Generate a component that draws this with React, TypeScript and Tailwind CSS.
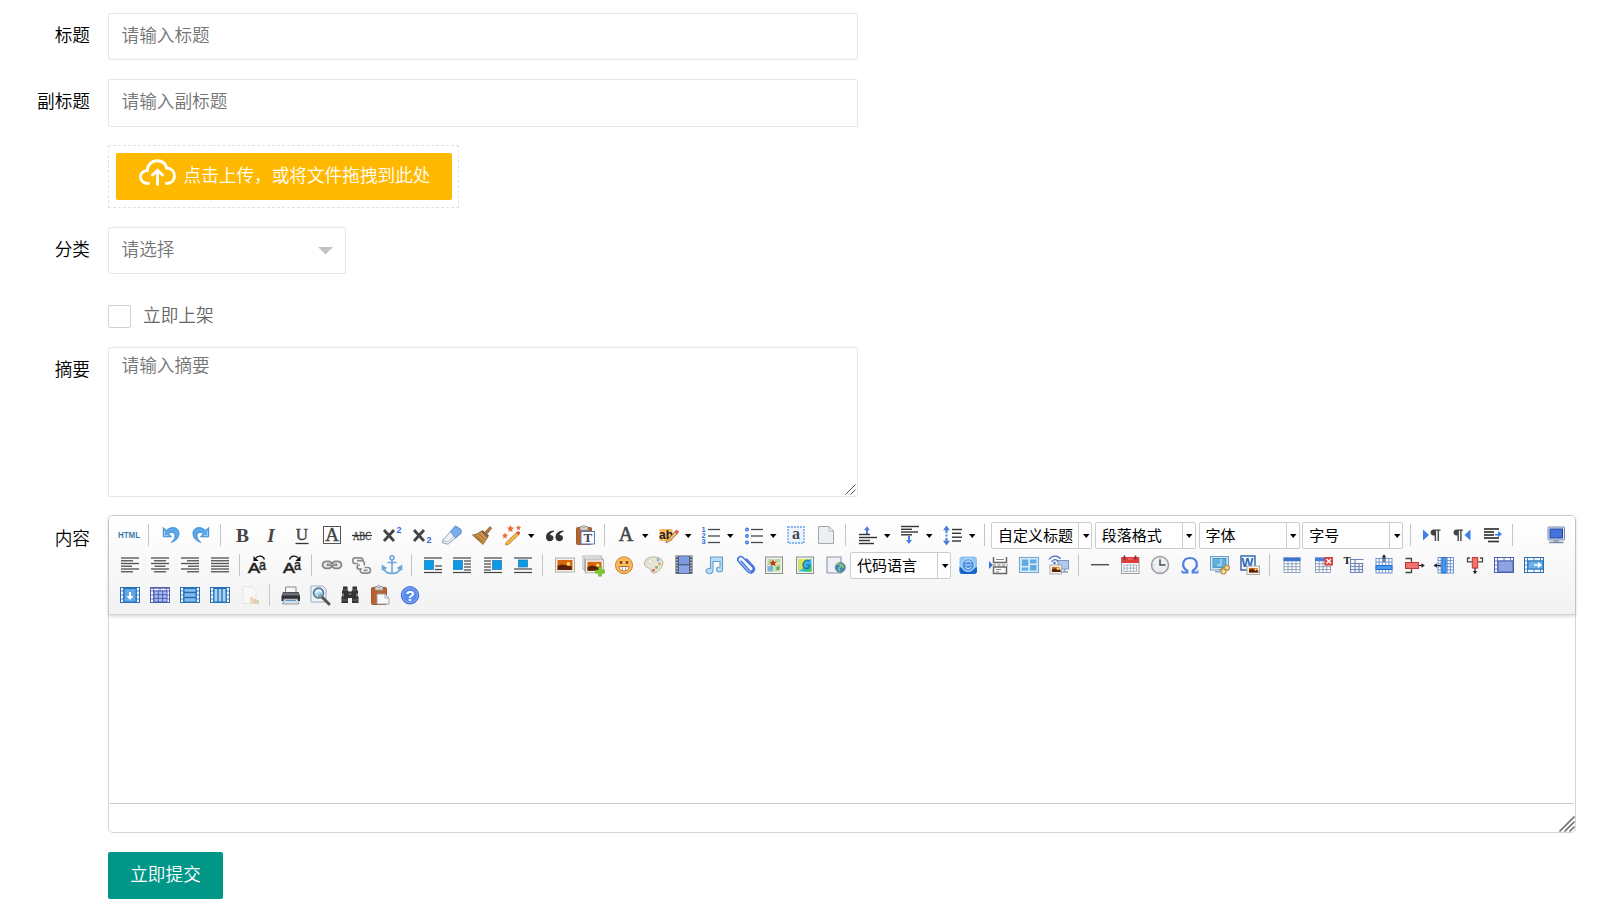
import React from "react";

type Kids = { children?: React.ReactNode };

const BLUE = "#2f6fd0";

function Ic({ children, m = "ml-[6px]" }: Kids & { m?: string }) {
  return (
    <svg viewBox="0 0 24 24" className={`h-6 w-6 shrink-0 overflow-visible ${m}`} fill="none">
      {children}
    </svg>
  );
}

function Sep() {
  return <span className="mr-[3.5px] ml-[7px] h-[22px] w-px shrink-0 bg-[#c3c5cb]" />;
}

function Arrow() {
  return (
    <svg viewBox="0 0 8 8" className="mr-[1.5px] ml-[3px] h-2 w-2 shrink-0">
      <path d="M1 3h6.500L4.250 7z" fill="#000" />
    </svg>
  );
}

function Combo({ label, m }: { label: string; m: string }) {
  return (
    <div className={`flex h-[27px] w-[101px] shrink-0 rounded-[2px] border border-[#ccc] bg-white ${m}`}>
      <span className="flex-1 pl-[6px] text-[15px] leading-[24px] whitespace-nowrap text-black">{label}</span>
      <span className="flex w-[13px] items-center justify-center border-l border-[#ccc]">
        <svg viewBox="0 0 8 8" className="mt-[2px] ml-px h-2 w-2">
          <path d="M1 2h6.500L4.250 6z" fill="#000" />
        </svg>
      </span>
    </div>
  );
}

function Lines({ rows, color = "#4a4a4a", w = 1.2 }: { rows: number[][]; color?: string; w?: number }) {
  return (
    <g stroke={color} strokeWidth={w}>
      {rows.map(([x1, x2, y], i) => (
        <path key={i} d={`M${x1} ${y}H${x2}`} />
      ))}
    </g>
  );
}

function T({ x, y, s, children, fill = "#444", serif, w = "700", italic, len }: Kids & {
  x: number; y: number; s: number; fill?: string; serif?: boolean; w?: string; italic?: boolean; len?: number;
}) {
  return (
    <text
      x={x} y={y} fontSize={s} fill={fill} fontWeight={w} textAnchor="middle"
      fontStyle={italic ? "italic" : "normal"} textLength={len} lengthAdjust="spacingAndGlyphs"
      fontFamily={serif ? "Liberation Serif, serif" : "Liberation Sans, sans-serif"}
    >
      {children}
    </text>
  );
}

function Undo({ flip }: { flip?: boolean }) {
  return (
    <g transform={flip ? "translate(24 0) scale(-1 1)" : undefined}>
      <path d="M4.3 4.5v9.3h8.2l-3-3c2.6-2.4 6.3-1.6 6.5 1.6.2 3-1.6 5-3.8 7C16.500 18.200 20 15 20 10.300 20 4.200 12.500 2.500 7.300 7.500z" fill="#5aa7ea" stroke="#2f80cc" strokeWidth="0.8" />
      <path d="M5.500 8v4.500h4" stroke="#a5d2f7" strokeWidth="0.9" />
    </g>
  );
}

function Picture({ x, y, w, h }: { x: number; y: number; w: number; h: number }) {
  return (
    <g>
      <rect x={x} y={y} width={w} height={h} fill="#f4f2ef" stroke="#a7a5a2" strokeWidth="0.9" />
      <rect x={x + 2} y={y + 2} width={w - 4} height={h - 4} fill="#d9650c" />
      <path d={`M${x + 2} ${y + h - 2}v-${h * 0.3}l${w * 0.25}-${h * 0.1} ${w * 0.5} ${h * 0.15}v${h * 0.25}z`} fill="#5a2109" />
      <circle cx={x + w * 0.68} cy={y + h * 0.42} r={h * 0.13} fill="#ffe37a" />
    </g>
  );
}

function Clipboard() {
  return (
    <g>
      <rect x="3.500" y="4.500" width="15" height="17" rx="1" fill="#b9622f" stroke="#8f4a20" strokeWidth="0.8" />
      <rect x="7" y="3.500" width="8" height="3.800" rx="0.600" fill="#d8d4cd" stroke="#777" strokeWidth="0.700" />
      <circle cx="11" cy="3.500" r="1.300" fill="#eee" stroke="#777" strokeWidth="0.600" />
    </g>
  );
}

function Page() {
  return (
    <g>
      <path d="M4.500 3.500H15l4.500 4.500v12.500h-15z" fill="#eceef2" stroke="#a3a7ae" strokeWidth="1" />
      <path d="M15 3.500V8h4.500z" fill="#fff" stroke="#a3a7ae" strokeWidth="0.800" />
    </g>
  );
}

function Grid({ x = 4, y = 5, w = 16, h = 14, c = 4, r = 4, stroke = "#7d9bd0", fill = "#fff" }: {
  x?: number; y?: number; w?: number; h?: number; c?: number; r?: number; stroke?: string; fill?: string;
}) {
  let d = "";
  for (let i = 1; i < c; i++) d += `M${x + (w * i) / c} ${y}v${h}`;
  for (let i = 1; i < r; i++) d += `M${x} ${y + (h * i) / r}h${w}`;
  return (
    <g stroke={stroke} strokeWidth="0.900">
      <rect x={x} y={y} width={w} height={h} fill={fill} />
      <path d={d} />
    </g>
  );
}

function CellBox({ violet, children }: Kids & { violet?: boolean }) {
  const stroke = violet ? "#4f60ab" : "#2c6fae";
  return (
    <g>
      <rect x="2.500" y="4.500" width="19" height="15" fill="#f5f9ff" stroke={stroke} strokeWidth="1" />
      <path d="M5.500 4.500v15M18.500 4.500v15M2.500 8h19M2.500 12h19M2.500 16h19M12 4.500v15" stroke={stroke} strokeWidth="0.800" />
      {children}
    </g>
  );
}

function JustifyIcon({ kind }: { kind: "l" | "c" | "r" | "j" }) {
  const w = kind === "j" ? [18, 18, 18, 18, 18, 18] : [18, 12, 18, 11, 18, 12];
  const rows = w.map((v, i) => {
    const x = kind === "l" || kind === "j" ? 3 : kind === "c" ? 12 - v / 2 : 21 - v;
    return [x, x + v, 5 + i * 2.75];
  });
  return <Lines rows={rows} color="#555" w={1.35} />;
}

function CaseIcon({ flip }: { flip?: boolean }) {
  return (
    <g>
      <text x="3" y="19.800" fontSize="14.500" textLength="12" lengthAdjust="spacingAndGlyphs" fill="#222" stroke="#222" strokeWidth="0.600" fontFamily="Liberation Sans, sans-serif">A</text>
      <text x="14" y="17.300" fontSize="14" textLength="7" lengthAdjust="spacingAndGlyphs" fill="#222" stroke="#222" strokeWidth="0.400" fontFamily="Liberation Sans, sans-serif">a</text>
      <g transform={flip ? "translate(29 0) scale(-1 1)" : undefined}>
        <path d="M10.500 5.500C12.500 2.300 18 2.300 19.500 6.500" stroke="#111" strokeWidth="1.300" />
        <path d="M8.500 3v5h5.200z" fill="#111" />
      </g>
    </g>
  );
}

function BlueSquare({ x, y, w = 9, h = 9 }: { x: number; y: number; w?: number; h?: number }) {
  return <rect x={x} y={y} width={w} height={h} fill="#0b9be6" stroke="#1d74b0" strokeWidth="0.700" />;
}

function Frame() {
  return <rect x="3.500" y="4" width="17" height="16.500" fill="#f3f3f3" stroke="#8c8c8c" strokeWidth="1" />;
}

function Label({ children, pt = "pt-[10px]" }: Kids & { pt?: string }) {
  return (
    <label className={`w-[108px] shrink-0 pr-[18px] text-right leading-[24px] text-black ${pt}`}>{children}</label>
  );
}

function RowOne() {
  return (
    <div className="flex h-[30px] items-center pr-[6px] pl-[2px]">
      <Ic><T x={12} y={15} s={9} fill="#3c7aab" len={22}>HTML</T></Ic>
      <Sep />
      <Ic><Undo /></Ic>
      <Ic><Undo flip /></Ic>
      <Sep />
      <Ic><T x={12.5} y={18.5} s={19} serif len={13}>B</T></Ic>
      <Ic><T x={11} y={18.5} s={19} serif italic>I</T></Ic>
      <Ic>
        <T x={12} y={17} s={17} serif w="400"><tspan stroke="#444" strokeWidth="0.400">U</tspan></T>
        <path d="M5.500 20.500h13" stroke="#333" strokeWidth="1.300" />
      </Ic>
      <Ic>
        <rect x="3.500" y="3.500" width="17" height="17" stroke="#555" />
        <T x={12} y={18} s={19} serif w="400"><tspan stroke="#444" strokeWidth="0.400">A</tspan></T>
      </Ic>
      <Ic>
        <T x={12} y={17} s={13.500} serif w="400" len={18}><tspan stroke="#444" strokeWidth="0.400">ABC</tspan></T>
        <path d="M2 12.500h20" stroke="#333" strokeWidth="1.200" />
      </Ic>
      <Ic>
        <path d="M4 7l10 11M14 7l-10 11" stroke="#444" strokeWidth="2.800" />
        <T x={19} y={10} s={9} fill="#3568e0">2</T>
      </Ic>
      <Ic>
        <path d="M4 7l10 11M14 7l-10 11" stroke="#444" strokeWidth="2.800" />
        <T x={19} y={19.500} s={9} fill="#3568e0">2</T>
      </Ic>
      <Ic>
        <path d="M2.500 17.500L15.500 3l5.500 3.500v3.800L8 21.300l-5.500-1.500z" fill="#eef1f6" stroke="#8d97ab" strokeWidth="0.900" />
        <path d="M10.500 8.500L15.500 3l5.500 3.500v3.800L15.500 15z" fill="#77aef0" stroke="#4f82cb" strokeWidth="0.800" />
        <path d="M2.500 17.500L8 19l13-12.500" stroke="#a3abbd" strokeWidth="0.700" />
      </Ic>
      <Ic>
        <path d="M15 9l5-5.500 1.700 1.700-4.200 5.300z" fill="#b07a3c" stroke="#8a5a26" strokeWidth="0.700" />
        <path d="M12.500 7l6.500 5.500-1.500 2.500-7-5.500z" fill="#7a6350" />
        <path d="M11 8l6.500 6.500-4.500 7-10.500-9.500c3.300-.3 6.300-1.700 8.500-4z" fill="#c8924d" stroke="#946124" strokeWidth="0.800" />
        <path d="M5.500 12l7 6.500M8.500 10.500l6 6M4 12.500l8 7" stroke="#8e5d23" strokeWidth="0.700" />
      </Ic>
      <Ic>
        <path d="M6 19.500L17 9l2.300 2.300L8.500 21.500l-3 .5z" fill="#f0b64a" stroke="#ba7d28" strokeWidth="0.800" />
        <path d="M16 9.900l1.800-1.600c1.600-.3 2.700 1 2.300 2.300L18.300 12z" fill="#e2553e" />
        <g fill="#ec6a3c">
          <path d="M10.500 2l1 2.300 2.500.4-1.800 1.700.4 2.500-2.100-1.200-2.200 1.200.5-2.500L7 4.700l2.400-.4zM18.500 2l.8 1.700 1.900.3-1.400 1.300.3 1.800-1.600-.9-1.600.9.300-1.800L15.800 4l1.900-.3zM5 9.500l.9 2 2.100.3-1.500 1.500.4 2.100L5 14.400l-1.900 1 .4-2.100L2 11.800l2.100-.3z" />
        </g>
      </Ic>
      <Arrow />
      <Ic>
        <g fill="#333">
          <path d="M11 7.500c-4.500 0-8 2.800-8 6.700 0 2.700 1.700 4 3.800 4 2.100 0 3.700-1.400 3.700-3.300 0-1.800-1.300-3-3.500-3 .3-1.700 1.800-2.700 4-3.200z" />
          <path d="M20.500 7.500c-4.500 0-8 2.800-8 6.700 0 2.700 1.700 4 3.800 4 2.100 0 3.700-1.400 3.700-3.300 0-1.800-1.300-3-3.500-3 .3-1.700 1.800-2.700 4-3.200z" />
        </g>
      </Ic>
      <Ic>
        <Clipboard />
        <rect x="8" y="8.500" width="13.500" height="12.500" fill="#fbfcff" stroke="#5a7fb8" />
        <T x={14.800} y={19.300} s={13} serif>T</T>
      </Ic>
      <Sep />
      <Ic><T x={12} y={18} s={20} serif w="400"><tspan stroke="#444" strokeWidth="0.600">A</tspan></T></Ic>
      <Arrow />
      <Ic>
        <rect x="2.500" y="6" width="13" height="12" fill="#f8bb62" />
        <T x={9} y={15.800} s={12} fill="#222">ab</T>
        <path d="M10 17.500l8.500-9.500 2.500 2-9 8.500-3.200 1z" fill="#efc07a" stroke="#94602b" strokeWidth="0.800" />
        <path d="M17.500 9l2-2.300 2.500 1.800-2 2.500z" fill="#df5650" />
      </Ic>
      <Arrow />
      <Ic>
        <T x={4.500} y={9} s={7.500} fill={BLUE}>1</T>
        <T x={4.500} y={15} s={7.500} fill={BLUE}>2</T>
        <T x={4.500} y={21} s={7.500} fill={BLUE}>3</T>
        <Lines w={1.300} rows={[[9, 21, 6.500], [9, 21, 13], [9, 21, 19.500]]} />
      </Ic>
      <Arrow />
      <Ic>
        <g stroke="#3e74e8" strokeWidth="1.400">
          <circle cx="5" cy="6.500" r="1.300" /><circle cx="5" cy="13" r="1.300" /><circle cx="5" cy="19.500" r="1.300" />
        </g>
        <Lines w={1.300} rows={[[9, 21, 6.500], [9, 21, 13], [9, 21, 19.500]]} />
      </Ic>
      <Arrow />
      <Ic>
        <rect x="4" y="4" width="16" height="16" fill="#eaf3fe" stroke="#8db6ee" strokeWidth="1.800" strokeDasharray="2 1" />
        <T x={12} y={16} s={16} serif>a</T>
      </Ic>
      <Ic><Page /></Ic>
      <Sep />
      <Ic>
        <path d="M11 3.200l3 4h-2v4h-2v-4H8z" fill="#4b7ddc" />
        <Lines w={1.400} color="#333" rows={[[3, 14, 11.500], [3, 21, 14.500], [3, 14, 17.500], [3, 18, 20.500]]} />
      </Ic>
      <Arrow />
      <Ic>
        <path d="M11 21l3-4h-2v-4h-2v4H8z" fill="#4b7ddc" />
        <Lines w={1.400} color="#333" rows={[[3, 21, 3.500], [3, 14, 6.300], [3, 20, 9], [3, 14, 11.800]]} />
      </Ic>
      <Arrow />
      <Ic>
        <path d="M5.500 2.500l3.500 4.800H6.500V10h-2V7.300H2zM5.500 22.500l3.500-4.800H6.500V15h-2v2.700H2zM4.500 11.500h2v2h-2z" fill="#4b7ddc" />
        <Lines w={1.400} color="#333" rows={[[11, 21, 6.500], [11, 20, 10.300], [11, 21, 14.200], [11, 20, 18]]} />
      </Ic>
      <Arrow />
      <Sep />
      <Combo label="自定义标题" m="ml-[2.5px]" />
      <Combo label="段落格式" m="ml-[2.75px]" />
      <Combo label="字体" m="ml-[2.75px]" />
      <Combo label="字号" m="ml-[2.75px]" />
      <Sep />
      <Ic m="ml-[5px]">
        <path d="M3 6.500v11l6-5.500z" fill="#3d80e8" />
        <path d="M20.500 6.500h-7c-4 0-4 6 0 6h1.200V18h1.400V7.800h1.500V18H19V7.800h1.500z" fill="#444" />
      </Ic>
      <Ic>
        <path d="M20.500 6.500v11l-6-5.500z" fill="#3d80e8" />
        <path d="M13 6.500H6.500c-4 0-4 6 0 6h1V18h1.400V7.800h1.300V18h1.400V7.800H13z" fill="#444" />
      </Ic>
      <Ic m="ml-[7px]">
        <Lines w={1.700} color="#333" rows={[[3, 18, 6], [3, 13, 9], [3, 13, 12], [3, 18, 15], [7, 18, 18.500]]} />
        <path d="M14 11h3V8l4 3-4 3.500v-2h-3z" fill="#3d80e8" />
      </Ic>
      <Sep />
      <Ic m="ml-auto">
        <rect x="3" y="4" width="16.500" height="13" rx="0.800" fill="#e4e9f3" stroke="#7389ad" strokeWidth="1" />
        <rect x="5" y="6" width="12.500" height="9" fill="#4674dc" stroke="#24429a" />
        <path d="M8.500 17h5.500v2H8.500z" fill="#9babc5" />
        <path d="M4 19.500h14.500" stroke="#7b8cab" strokeWidth="1.500" />
      </Ic>
    </div>
  );
}

function RowTwo() {
  return (
    <div className="flex h-[30px] items-center pr-[6px] pl-[2.5px]">
      <Ic><JustifyIcon kind="l" /></Ic>
      <Ic><JustifyIcon kind="c" /></Ic>
      <Ic><JustifyIcon kind="r" /></Ic>
      <Ic><JustifyIcon kind="j" /></Ic>
      <Sep />
      <Ic m="ml-[2px]"><CaseIcon /></Ic>
      <Ic m="ml-[10.5px]"><CaseIcon flip /></Ic>
      <Sep />
      <Ic m="ml-[5px]">
        <g stroke="#858585" strokeWidth="1.800">
          <rect x="2.500" y="8.300" width="9.500" height="7" rx="3.500" fill="#e4e4e4" /><rect x="12" y="8.300" width="9.500" height="7" rx="3.500" fill="#e4e4e4" />
        </g>
        <path d="M7 11.800h10" stroke="#777" strokeWidth="2.400" />
        <path d="M8 11.800h8" stroke="#ccc" strokeWidth="0.800" />
      </Ic>
      <Ic>
        <g stroke="#8a8a8a" strokeWidth="1.700">
          <path d="M8 10.500H5.500a2.800 2.800 0 010-5.600h5a2.800 2.800 0 012.500 3.500" />
          <path d="M7 7.700h4.500c2.800 0 3.500 3 2.500 4.500M10 12H9c-2.500 0-2.500 4 0 4h3" />
          <path d="M14.500 14.500h3.200a2.800 2.800 0 010 5.600h-5a2.800 2.800 0 01-2-4.500M13.500 17.300h4" />
        </g>
      </Ic>
      <Ic m="ml-[5.5px]">
        <g stroke="#6ea6db" strokeWidth="1.600">
          <circle cx="12" cy="4.700" r="2" /><path d="M12 7v13M7.500 9.500h9M3 14c1 4 4.500 6.500 9 6.500s8-2.500 9-6.500M2.500 17.500V13l4 2.500M21.500 17.500V13l-4 2.500" />
        </g>
      </Ic>
      <Sep />
      <Ic>
        <Lines color="#444" rows={[[3, 21, 5], [14, 21, 13], [14, 21, 16.500], [3, 21, 19.500]]} />
        <BlueSquare x={3.500} y={7.500} />
      </Ic>
      <Ic m="ml-[5px]">
        <Lines color="#444" rows={[[3, 21, 5], [14, 21, 8], [14, 21, 11], [14, 21, 14], [14, 21, 17], [3, 21, 19.500]]} />
        <BlueSquare x={3.500} y={7.500} />
      </Ic>
      <Ic m="ml-[7px]">
        <Lines color="#444" rows={[[3, 21, 5], [3, 10, 8], [3, 10, 11], [3, 10, 14], [3, 10, 17], [3, 21, 19.500]]} />
        <BlueSquare x={11.500} y={7.500} />
      </Ic>
      <Ic>
        <Lines color="#444" rows={[[3, 21, 5], [3, 21, 16], [3, 21, 19.500]]} />
        <BlueSquare x={7.500} y={7} h={7} />
      </Ic>
      <Sep />
      <Ic m="ml-[6px]"><Picture x={2.500} y={5} w={19} h={14} /></Ic>
      <Ic m="ml-[5.5px]">
        <rect x="1" y="3" width="18" height="13" fill="#fff" stroke="#aaa" strokeWidth="0.900" />
        <rect x="2.500" y="5" width="18" height="13" fill="#fff" stroke="#aaa" strokeWidth="0.900" />
        <Picture x={3.500} y={6.800} w={18} h={13} />
        <path d="M16.500 14h3v3h3v3.200h-3v3h-3v-3h-3V17h3z" fill="#7fcb2f" stroke="#5aa316" strokeWidth="0.500" />
      </Ic>
      <Ic>
        <circle cx="12" cy="12.300" r="8.500" fill="#f8bd59" stroke="#cf7d2e" />
        <circle cx="9" cy="9.500" r="1.400" fill="#743c17" /><circle cx="15" cy="9.500" r="1.400" fill="#743c17" />
        <path d="M7 13.500h10c0 2.600-2 4.500-5 4.500s-5-1.900-5-4.500z" fill="#fff" stroke="#a55725" strokeWidth="0.800" />
        <path d="M10.300 13.500v4M13.700 13.500v4" stroke="#a55725" strokeWidth="0.500" />
      </Ic>
      <Ic>
        <path d="M2.500 10C3 5 8 3.500 13 4c6 .6 9 3.500 7.500 8-1.500 4.500-6 8.500-9.500 8-2.500-.4-1.500-3.500-3-4.500-1.500-.9-5.800-.5-5.500-5.500z" fill="#e7e4d7" stroke="#b1ac9c" strokeWidth="0.900" />
        <circle cx="8" cy="8.500" r="2" fill="#faf9f4" stroke="#bbb8aa" strokeWidth="0.500" />
        <circle cx="16" cy="7" r="1.400" fill="#71b4e8" /><circle cx="17.500" cy="11" r="1.400" fill="#e2a353" /><circle cx="14.500" cy="14.500" r="1.400" fill="#79b653" /><circle cx="11.500" cy="17.200" r="1.300" fill="#d35b45" />
      </Ic>
      <Ic>
        <rect x="3.500" y="2.500" width="17" height="18.500" fill="#4c5361" />
        <path d="M5 3v18M19 3v18" stroke="#d5dae3" strokeWidth="1.300" strokeDasharray="1.600 1.300" />
        <rect x="6.800" y="3.200" width="10.400" height="8" fill="#7d9be0" /><rect x="6.800" y="12.300" width="10.400" height="8" fill="#88a4e6" />
      </Ic>
      <Ic>
        <path d="M8.500 4h12v12.500a3 2.500 0 11-3-2.500h.5V8.500h-7V18a3.500 2.700 0 11-2.500-2.600z" fill="#b8ddf8" stroke="#669fcb" strokeWidth="1.100" />
      </Ic>
      <Ic m="ml-[8px]">
        <path d="M7 8l8.500 9.500c2 2 5-1 3.300-3.200L9 4.500C6.500 2 2 5 4.500 8.500l9 10c3.500 3.500 9-.5 6-5L12.500 6" stroke="#4876dc" strokeWidth="1.600" strokeLinecap="round" />
      </Ic>
      <Ic m="ml-[4px]">
        <Frame />
        <rect x="5.500" y="6" width="13" height="12.500" fill="#b9d9a2" />
        <path d="M5.500 12c4-1 5 1 7 3l-2 3.500H5.500z" fill="#75b7dc" />
        <path d="M12 6v12.500M5.500 13l13-3M15 13l3.500 5" stroke="#fff5b8" strokeWidth="1.200" />
        <path d="M11 6.500l1.200 2.200 2.500.2-1.800 1.700.5 2.500-2.400-1.200-2.300 1.200.5-2.500-1.800-1.700 2.500-.2z" fill="#c9352c" />
        <rect x="14.500" y="13.500" width="3" height="3.500" fill="#6aa35c" />
      </Ic>
      <Ic m="ml-[7px]">
        <Frame />
        <rect x="5.500" y="6" width="13" height="12.500" fill="#27bdec" />
        <path d="M5.500 6h12l-6 4-1 5-5 3.500z" fill="#d8e844" />
        <path d="M13 15.500l5.500-4v7h-8z" fill="#3cc267" />
        <path d="M16.500 8c-4-2-7 2-6 5.500 1 3 6 2.500 6-1.500h-3" stroke="#2876b5" strokeWidth="1.700" />
      </Ic>
      <Ic>
        <path d="M4 4h14v16H4z" fill="#edf0f4" stroke="#8e98a8" strokeWidth="1.100" />
        <circle cx="17.300" cy="14.500" r="5" fill="#3b8bc3" stroke="#60798b" strokeWidth="0.800" />
        <path d="M14 12c2-2 4-1.500 4 .5s-2 1-2 3 1 2 1 3M19 11.500c1 1-.5 2 1.500 3.500" stroke="#92c965" strokeWidth="1.500" />
      </Ic>
      <Combo label="代码语言" m="ml-[3px]" />
      <Ic m="ml-[4.5px]">
        <rect x="3.500" y="3.500" width="17.500" height="17.500" rx="3" fill="#8cc4f2" />
        <path d="M3.500 14c6 3 12 3 17.500 0v4a3 3 0 01-3 3h-11.500a3 3 0 01-3-3z" fill="#1567c9" />
        <circle cx="12.200" cy="12" r="6.300" fill="#4d8fe0" stroke="#b5d7f8" strokeWidth="1.300" />
        <path d="M8.800 12h7M9.500 9.800c1.500-2.500 4-2.500 5.500 0M9.500 14c1.500 2.300 4 2.300 5.500 0" stroke="#c5defa" strokeWidth="1.200" />
      </Ic>
      <Ic m="ml-[7px]">
        <path d="M2 8v8l3.800-4z" fill="#2f70dc" />
        <path d="M6 12h15" stroke="#777" strokeWidth="1" strokeDasharray="3 1.500" />
        <path d="M6.500 4v5.500h13V4M6.500 20.500V14h13v6.500z" fill="#fff" stroke="#666" strokeWidth="1.500" />
        <path d="M9 6.500h8M9 16.500h5M9 18.800h3" stroke="#888" strokeWidth="1" />
      </Ic>
      <Ic m="ml-[6.5px]">
        <rect x="2.500" y="4.500" width="19" height="15" fill="#d9edfb" stroke="#77a8d1" strokeWidth="1.100" />
        <rect x="4.800" y="6.500" width="6.500" height="6.500" fill="#5fabe2" /><rect x="13" y="6.500" width="6.500" height="4" fill="#5fabe2" />
        <rect x="4.800" y="14.500" width="6.500" height="3" fill="#5fabe2" /><rect x="13" y="12" width="6.500" height="5.500" fill="#5fabe2" />
      </Ic>
      <Ic m="ml-[5.5px]">
        <rect x="11" y="7.500" width="10.500" height="8.500" fill="#b1caeb" stroke="#7c96bf" /><path d="M14 19h7M17.500 16v3" stroke="#8a9dbc" strokeWidth="1.500" />
        <path d="M2 6.500C5 2 11 2 13.500 6M4.500 9c2-3 5-3 6.500-.3" stroke="#456fc4" strokeWidth="1.300" />
        <circle cx="7.500" cy="10" r="1.200" fill="#456fc4" />
        <Picture x={3} y={12} w={11.500} h={9} />
      </Ic>
      <Sep />
      <Ic><path d="M3 11.700h18" stroke="#555" strokeWidth="1.500" /></Ic>
      <Ic>
        <rect x="3.500" y="4.500" width="17.500" height="16" fill="#f3f4f6" stroke="#9b9fa6" />
        <rect x="3.500" y="4" width="17.500" height="6" fill="#df3d3c" />
        <path d="M6.500 2.500v4.300M17.500 2.500v4.300" stroke="#7b3131" strokeWidth="1.600" />
        <path d="M10 6h4.500" stroke="#f18a86" />
        <Grid x={6} y={12} w={12.500} h={6.300} c={4} r={2} stroke="#a4b2c2" />
      </Ic>
      <Ic>
        <circle cx="12" cy="12" r="8.500" fill="#eeeff1" stroke="#999da3" strokeWidth="1.500" />
        <path d="M12 6.500V12h5.500" stroke="#4a4e54" strokeWidth="1.500" />
        <path d="M12 4.800v1M12 18.200v1M4.800 12h1" stroke="#999" />
      </Ic>
      <Ic>
        <path d="M4 19.500h5.300v-1.700C3 14.500 4 5 12 5s9 9.500 2.700 12.800v1.700H20" stroke="#4e7fe0" strokeWidth="2.200" />
        <path d="M4 17v3M20 17v3" stroke="#4e7fe0" />
      </Ic>
      <Ic>
        <rect x="2.500" y="3.500" width="18" height="13.500" fill="#cbe6f8" stroke="#6fa0c8" />
        <rect x="5" y="5.500" width="13" height="9" fill="#5eb0de" stroke="#458cbb" strokeWidth="0.800" />
        <path d="M7 18.800h8" stroke="#84a9c9" strokeWidth="1.500" /><path d="M13 6v6h-4" stroke="#cff0ff" />
        <path d="M11 17l8-4" stroke="#a67a2b" strokeWidth="1" />
        <g fill="#f6dfa4" stroke="#bb8e3c" strokeWidth="1.200"><circle cx="15.500" cy="18.500" r="2.500" /><circle cx="19" cy="14.700" r="2.400" /></g>
      </Ic>
      <Ic>
        <rect x="3" y="3" width="14" height="14" fill="#f5f9ff" stroke="#396cb2" strokeWidth="1.500" />
        <T x={9.500} y={14} s={12.500} fill="#2a64b3">W</T>
        <Picture x={9} y={13} w={12.500} h={8.500} />
      </Ic>
      <Sep />
      <Ic m="ml-[6.5px]">
        <Grid x={4} y={5} w={16} h={14.500} c={4} r={5} stroke="#879ab8" />
        <rect x="3.500" y="4.500" width="17" height="3.500" fill="#3f70d4" />
      </Ic>
      <Ic m="ml-[8px]">
        <Grid x={3.500} y={5} w={15} h={14.500} c={4} r={5} stroke="#879ab8" />
        <rect x="3" y="4.500" width="15" height="3.500" fill="#4b7bdc" />
        <rect x="12.500" y="4" width="8.500" height="8.500" fill="#e23b39" /><path d="M14.500 6l4.500 4.500M19 6l-4.500 4.500" stroke="#fff" strokeWidth="1.600" />
      </Ic>
      <Ic>
        <T x={5} y={11} s={10.500} serif fill="#111">T</T>
        <path d="M8 6.500h13.500M8.500 7v12.500h12V11M8.500 10.500h13M13 7v12.500M17 10.500v9M8.500 13.500h12M8.500 16.500h12" stroke="#7187ba" strokeWidth="1.200" />
      </Ic>
      <Ic>
        <Grid x={4} y={5.500} w={16} h={14.500} c={5} r={4} stroke="#638cce" />
        <rect x="4" y="12.500" width="16" height="4" fill="#469bf0" stroke="#246dc3" />
        <path d="M12 9V2.500" stroke="#222" strokeWidth="1.200" /><path d="M9.800 4.500L12 1.200l2.200 3.300z" fill="#222" />
      </Ic>
      <Ic m="ml-[7px]">
        <path d="M2.500 5.500h6V9M2.500 19.500h6V16" stroke="#444" strokeWidth="1.300" />
        <rect x="2.500" y="9.500" width="13" height="6" fill="#f0726c" stroke="#c03934" />
        <path d="M16 12.500h4" stroke="#222" strokeWidth="1.200" /><path d="M18.500 10.300l3.300 2.200-3.300 2.200z" fill="#222" />
      </Ic>
      <Ic m="ml-[5px]">
        <Grid x={6} y={4.500} w={15.500} h={15.500} c={5} r={5} stroke="#638cce" />
        <rect x="10" y="4.500" width="4" height="15.500" fill="#469bf0" stroke="#246dc3" />
        <path d="M9 12.500H3.500" stroke="#222" strokeWidth="1.200" /><path d="M4.800 10.300L1.500 12.500l3.300 2.200z" fill="#222" />
      </Ic>
      <Ic m="ml-[6.5px]">
        <path d="M4.500 4.500v4.300h4.500M19.500 4.500v4.300H15M4.500 5H7M19.500 5H17" stroke="#444" strokeWidth="1.300" />
        <rect x="9.300" y="4.500" width="5.400" height="10.500" fill="#f0726c" stroke="#c03934" />
        <path d="M12 15v4" stroke="#222" strokeWidth="1.200" /><path d="M9.800 18L12 21.300l2.200-3.300z" fill="#222" />
      </Ic>
      <Ic m="ml-[5.5px]">
        <CellBox violet><rect x="6" y="8" width="15" height="11" fill="#8ca4df" stroke="#4b61b4" /></CellBox>
      </Ic>
      <Ic>
        <CellBox><rect x="6" y="8" width="15" height="8" fill="#6db2ec" stroke="#2474ba" /><path d="M12 11.300h4V9l4 3-4 3v-2.300h-4z" fill="#fff" /></CellBox>
      </Ic>
    </div>
  );
}

function RowThree() {
  return (
    <div className="flex h-[30px] items-center pl-[3px]">
      <Ic>
        <CellBox><rect x="6" y="5.500" width="12" height="13.500" fill="#62a9e6" stroke="#2474ba" /><path d="M11 9h2v4h2.500L12 17l-3.500-4H11z" fill="#fff" /></CellBox>
      </Ic>
      <Ic m="ml-[5.5px]">
        <CellBox violet>
          <Grid x={6} y={8} w={13} h={11} c={3} r={3} stroke="#4055b3" fill="#a9bdf0" />
          <path d="M2.500 5h19" stroke="#5365b5" strokeWidth="1.500" />
        </CellBox>
      </Ic>
      <Ic>
        <CellBox><rect x="6" y="5.500" width="12" height="13.500" fill="#83bdf0" stroke="#2474ba" /><path d="M6 9.500h12M6 14.500h12" stroke="#236eb2" strokeWidth="1.600" /></CellBox>
      </Ic>
      <Ic>
        <CellBox><rect x="6" y="5.500" width="12" height="13.500" fill="#a9d3f6" stroke="#2474ba" /><path d="M10 5.500V19M14 5.500V19" stroke="#236eb2" strokeWidth="1.300" /></CellBox>
      </Ic>
      <Ic>
        <g opacity="0.350">
          <path d="M5 3.500h9l4 4v13H5z" fill="#fff" stroke="#c5c8cc" />
          <rect x="12" y="14" width="3" height="7" fill="#d8b637" /><rect x="15" y="16" width="3" height="5" fill="#d97c56" /><rect x="18" y="17" width="3" height="4" fill="#73ba4c" />
        </g>
      </Ic>
      <Sep />
      <Ic m="ml-[5.5px]">
        <path d="M6.500 9V4h10.500v5" fill="#f6f6f6" stroke="#888" />
        <path d="M4 9h15.500l1.500 4v5H2.500v-5z" fill="#303236" />
        <path d="M4.500 9.500h14.500l1.500 3H3z" fill="#6c7077" />
        <path d="M5 16h13.500l1.500 5H3.500z" fill="#d8dce1" stroke="#858b94" strokeWidth="0.800" />
        <path d="M6.500 17.500h10.500" stroke="#5496d1" />
      </Ic>
      <Ic m="ml-[5.5px]">
        <path d="M3 3h12l3 3v13H3z" fill="#edf2f9" stroke="#91a3bf" strokeWidth="0.900" />
        <path d="M14 14l7 7" stroke="#555" strokeWidth="3" strokeLinecap="round" />
        <circle cx="10.500" cy="10" r="5" fill="#a7d9f5" stroke="#56708b" strokeWidth="1.500" />
        <path d="M8 10c1-3 4-3 5-1" stroke="#fff" strokeWidth="1.500" /><path d="M10 13c2 0 3-1 3-2" stroke="#7ca84a" strokeWidth="1.300" />
      </Ic>
      <Ic>
        <path d="M5 3.500h4.500v3l1 2h3l1-2v-3H19v3l1 1.500v3h-1l1.500 3V20h-6.500v-5h-4v5H3.500v-6L5 11H4V8l1-1.500z" fill="#333" />
        <path d="M3.500 17h6M14.500 17h6M5.500 7h4M14.500 7h4M5.500 10v4M18.500 10v4" stroke="#777" strokeWidth="0.900" />
        <path d="M10.800 11h2.400" stroke="#aaa" />
      </Ic>
      <Ic m="ml-[5.5px]">
        <Clipboard />
        <path d="M9 11h8l4 4v6H9z" fill="#f5f8fc" stroke="#94a0ae" strokeWidth="0.900" /><path d="M17 11v4h4" stroke="#94a0ae" strokeWidth="0.800" />
      </Ic>
      <Ic>
        <circle cx="12" cy="12.300" r="8.700" fill="#5a8cee" stroke="#3b68cf" />
        <circle cx="12" cy="12.300" r="7.500" stroke="#8fb3f6" strokeWidth="0.800" />
        <T x={12} y={17.600} s={15} fill="#fff">?</T>
      </Ic>
    </div>
  );
}

export default function App() {
  return (
    <form className="h-[909px] w-[1610px] overflow-hidden bg-white pt-[13px] font-['Noto_Sans_CJK_SC_DemiLight','Noto_Sans_CJK_SC',sans-serif] text-[17.65px] font-[350]">
      <div className="mb-[19px] flex h-[47px]">
        <Label>标题</Label>
        <input className="h-[47px] w-[750px] rounded-[2px] border border-[#e6e6e6] pb-[5px] pl-[12.5px] outline-none placeholder:text-[#757575]" placeholder="请输入标题" />
      </div>
      <div className="mb-[18px] flex h-[48px]">
        <Label>副标题</Label>
        <input className="h-[48px] w-[750px] rounded-[2px] border border-[#e6e6e6] pb-[5px] pl-[12.5px] outline-none placeholder:text-[#757575]" placeholder="请输入副标题" />
      </div>
      <div className="mb-[19px] ml-[108px] flex h-[63px] w-[351px] items-center justify-center border border-dashed border-[#e2e2e2]">
        <button type="button" className="flex h-[47px] w-[336px] items-center rounded-[2px] bg-[#ffb800] pl-[23px] text-white">
          <svg viewBox="0 0 37 27" className="mb-[8px] h-[27px] w-[37px] shrink-0" fill="none" stroke="#fff" strokeWidth="2.900" strokeLinecap="round">
            <path d="M9.500 24.500C4.500 24.500 1.500 21.500 1.500 18c0-3.800 3-6.300 6.800-6.500C8.500 5.500 13 1.800 18 1.800c4.800 0 8.500 2.700 9.600 7.200C32.500 9.300 35.500 12.500 35.500 16.800c0 4.500-3 7.700-8 7.700" />
            <path d="M18.500 25.500V12M13.500 16l5-4.800 5 4.800" />
          </svg>
          <span className="ml-[8px] pb-[3px] leading-[24px] whitespace-nowrap">点击上传，或将文件拖拽到此处</span>
        </button>
      </div>
      <div className="mb-[31px] flex h-[47px]">
        <Label>分类</Label>
        <div className="flex h-[47px] w-[238px] items-center justify-between rounded-[2px] border border-[#e6e6e6] pr-[12px] pl-[12.5px] text-[#757575]">
          <span className="pb-[3px] leading-[24px]">请选择</span>
          <svg viewBox="0 0 15 8" className="h-2 w-[15px]"><path d="M0 0h15L7.500 7.500z" fill="#c2c2c2" /></svg>
        </div>
      </div>
      <div className="mb-[19px] ml-[108px] flex h-[23px] items-center">
        <span className="h-[23px] w-[23px] rounded-[2px] border border-[#d2d2d2] bg-white" />
        <span className="ml-[12px] pb-[4px] leading-[24px] text-[#666]">立即上架</span>
      </div>
      <div className="mb-[18px] flex h-[150px]">
        <Label>摘要</Label>
        <div className="relative h-[150px] w-[750px]">
          <textarea className="block h-[150px] w-[750px] resize-none rounded-[2px] border border-[#e6e6e6] pt-[5px] pl-[12.5px] leading-[24px] outline-none placeholder:text-[#757575]" placeholder="请输入摘要" />
          <svg viewBox="0 0 11 11" className="absolute right-[2px] bottom-[2px] h-[11px] w-[11px]" stroke="#555" strokeWidth="1">
            <path d="M0.500 10.500l10-10M5.500 10.500l5-5" />
          </svg>
        </div>
      </div>
      <div className="mb-[19px] flex h-[318px]">
        <Label pt="pt-[11px]">内容</Label>
        <div className="flex h-[318px] w-[1468px] flex-col rounded-[5px] border border-[#d4d4d4] bg-white">
          <div className="h-[99px] rounded-t-[4px] border-b border-[#d4d4d4] bg-linear-to-b from-white to-[#f2f2f2] pt-[4px] font-['Noto_Sans_CJK_SC',sans-serif] font-normal shadow-[0_1px_4px_rgba(0,0,0,0.2)]">
            <RowOne />
            <RowTwo />
            <RowThree />
          </div>
          <div className="flex-1" />
          <div className="mx-px flex h-[29px] items-end justify-end border-t border-[#ccc]">
            <svg viewBox="0 0 16 16" className="mr-[-1px] h-4 w-4" stroke="#777" strokeWidth="1.700">
              <path d="M0.500 15.500l15-15M5.500 15.500l10-10M10.500 15.500l5-5" />
            </svg>
          </div>
        </div>
      </div>
      <button type="button" className="ml-[108px] flex h-[47px] w-[115px] items-center justify-center rounded-[2px] bg-[#009688] text-white">
        <span className="pb-[3px] leading-[24px]">立即提交</span>
      </button>
    </form>
  );
}
